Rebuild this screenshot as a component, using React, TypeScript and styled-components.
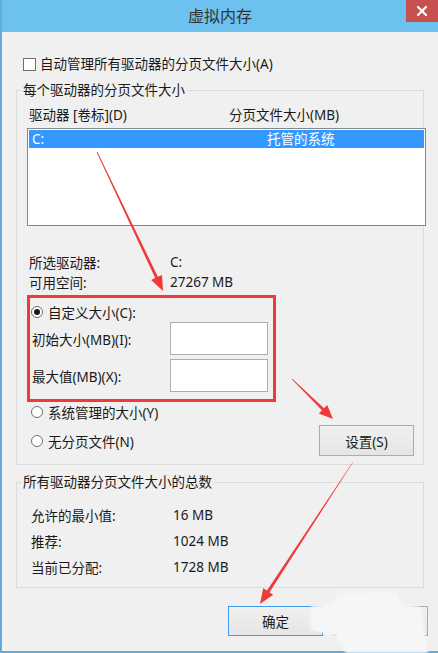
import React from 'react';
import styled, { createGlobalStyle } from 'styled-components';

const GlobalStyle = createGlobalStyle`
  html, body {
    margin: 0;
    padding: 0;
    background: #f0f0f0;
  }
  body {
    font-family: "Noto Sans", "Noto Sans CJK SC", sans-serif;
  }
`;

const Window = styled.div`
  position: relative;
  width: 438px;
  height: 653px;
  box-sizing: border-box;
  border-left: 2px solid #62ade0;
  border-bottom: 2px solid #62ade0;
  background: #f0f0f0;
  display: flex;
  flex-direction: column;
  font-size: 13.5px;
  color: #1a1a1a;
`;

const TitleBar = styled.div`
  height: 32px;
  flex-shrink: 0;
  background: #6cc1ef;
  display: grid;
  grid-template-columns: 1fr auto 1fr;
`;

const Title = styled.div`
  grid-column: 2;
  align-self: center;
  font-size: 16px;
  line-height: 20px;
  color: #333;
`;

const CloseButton = styled.div`
  grid-column: 3;
  justify-self: end;
  width: 32px;
  height: 22px;
  background: #c75050;
  display: flex;
  align-items: center;
  justify-content: center;
`;

const Content = styled.div`
  padding: 23px 14px 0 14px;
`;

const CheckRow = styled.label`
  display: flex;
  align-items: center;
  gap: 4px;
  height: 18px;
  line-height: 18px;
  padding-left: 7px;
`;

const CheckBox = styled.span`
  width: 13px;
  height: 13px;
  box-sizing: border-box;
  border: 1px solid #707070;
  background: #fff;
  flex-shrink: 0;
`;

const GroupBox = styled.fieldset<{ $gap: number }>`
  margin: ${p => p.$gap}px 0 0 0;
  padding: 0 0 0 4px;
  border: 1px solid #dcdcdc;
  min-width: 0;
`;

const Legend = styled.legend`
  padding: 0 2px;
  line-height: 18px;
`;

const GroupInner = styled.div<{ $top: number; $bottom: number; $left: number }>`
  padding: ${p => p.$top}px 0 ${p => p.$bottom}px ${p => p.$left}px;
`;

const HeaderRow = styled.div`
  display: grid;
  grid-template-columns: 200px 1fr;
  padding-left: 2px;
  line-height: 18px;
`;

const ListBox = styled.div`
  margin-top: 4px;
  width: 399px;
  height: 98px;
  box-sizing: border-box;
  border: 1px solid #828790;
  background: #fff;
  padding: 1px;
`;

const ListRow = styled.div<{ $selected?: boolean }>`
  display: grid;
  grid-template-columns: 235px 1fr;
  height: 18px;
  line-height: 18px;
  padding-left: 3px;
  background: ${p => (p.$selected ? '#3399ff' : 'transparent')};
  color: ${p => (p.$selected ? '#fff' : '#1a1a1a')};
`;

const InfoGrid = styled.div<{ $top: number; $label: number; $row: number; $left: number; $bottom?: number }>`
  margin-top: ${p => p.$top}px;
  padding: 0 0 ${p => p.$bottom ?? 0}px ${p => p.$left}px;
  display: grid;
  grid-template-columns: ${p => p.$label}px auto;
  grid-auto-rows: ${p => p.$row}px;
  align-items: center;
`;

const RadioRow = styled.label<{ $top: number }>`
  display: flex;
  align-items: center;
  gap: 5px;
  height: 20px;
  margin-top: ${p => p.$top}px;
  padding-left: 4px;
`;

const Radio = styled.span<{ $checked?: boolean }>`
  width: 12px;
  height: 12px;
  box-sizing: border-box;
  border: 1px solid #707070;
  border-radius: 50%;
  background: #fff;
  display: flex;
  align-items: center;
  justify-content: center;
  flex-shrink: 0;

  &::after {
    content: '';
    display: ${p => (p.$checked ? 'block' : 'none')};
    width: 6px;
    height: 6px;
    border-radius: 50%;
    background: #1a1a1a;
  }
`;

const SizeRow = styled.div<{ $top: number }>`
  display: grid;
  grid-template-columns: 138px 98px;
  align-items: center;
  padding-left: 5px;
  margin-top: ${p => p.$top}px;
`;

const TextBox = styled.input`
  width: 98px;
  height: 33px;
  box-sizing: border-box;
  border: 1px solid #abadb3;
  background: #fff;
  margin: 0;
  padding: 0 4px;
  font: inherit;
`;

const LastRow = styled.div`
  display: flex;
  align-items: center;
  justify-content: space-between;
  margin-top: 3px;
  padding-right: 9px;
`;

const Button = styled.button<{ $default?: boolean; $h: number }>`
  width: 95px;
  height: ${p => p.$h}px;
  box-sizing: border-box;
  margin: 0;
  padding: 0;
  border: 1px solid ${p => (p.$default ? '#3d9cf0' : '#acacac')};
  background: linear-gradient(#f0f0f0, #e5e5e5);
  font: inherit;
  font-size: 13.5px;
  color: #1a1a1a;
`;

const Footer = styled.div`
  display: flex;
  justify-content: flex-end;
  gap: 10px;
  padding: 18px 10px 0 0;
`;

const Overlay = styled.svg`
  position: absolute;
  top: 0;
  left: -2px;
  width: 438px;
  height: 653px;
  pointer-events: none;
  overflow: visible;
`;

type Pt = [number, number];

const arrowPoints = (tail: Pt, tip: Pt, headLen = 15, headW = 6, w0 = 0.4, w1 = 1.5) => {
  const dx = tip[0] - tail[0];
  const dy = tip[1] - tail[1];
  const len = Math.hypot(dx, dy);
  const ux = dx / len;
  const uy = dy / len;
  const nx = -uy;
  const ny = ux;
  const bx = tip[0] - ux * headLen;
  const by = tip[1] - uy * headLen;
  const pts: Pt[] = [
    [tail[0] + nx * w0, tail[1] + ny * w0],
    [bx + nx * w1, by + ny * w1],
    [bx + nx * headW, by + ny * headW],
    tip,
    [bx - nx * headW, by - ny * headW],
    [bx - nx * w1, by - ny * w1],
    [tail[0] - nx * w0, tail[1] - ny * w0],
  ];
  return pts.map(p => `${p[0].toFixed(1)},${p[1].toFixed(1)}`).join(' ');
};

const RED = '#f03a3a';

const Annotations = () => (
  <Overlay viewBox="0 0 438 653">
    <defs>
      <filter id="soft" x="-20%" y="-20%" width="140%" height="140%">
        <feGaussianBlur stdDeviation="1.2" />
      </filter>
    </defs>
    <rect x="28.5" y="296.5" width="246" height="104" fill="none" stroke={RED} strokeWidth="3" />
    <polygon points={arrowPoints([97, 152], [163, 291])} fill={RED} />
    <polygon points={arrowPoints([292, 379], [333, 419], 14, 6, 0.4, 1.4)} fill={RED} />
    <polygon points={arrowPoints([353, 462], [260, 604], 15, 6, 0.2, 1.5)} fill={RED} />
    <path
      d="M338 593 L396 592 L402 604 L421 607 L426 640 L428 653 L346 653 L336 636 L310 630 L311 606 L333 604 Z"
      fill="#f6f6f6"
      filter="url(#soft)"
    />
  </Overlay>
);

export default function App() {
  return (
    <>
      <GlobalStyle />
      <Window>
        <TitleBar>
          <Title>虚拟内存</Title>
          <CloseButton>
            <svg width="10" height="10" viewBox="0 0 10 10">
              <path d="M1 1 L9 9 M9 1 L1 9" stroke="#fff" strokeWidth="2.2" strokeLinecap="square" />
            </svg>
          </CloseButton>
        </TitleBar>

        <Content>
          <CheckRow>
            <CheckBox />
            自动管理所有驱动器的分页文件大小(A)
          </CheckRow>

          <GroupBox $gap={8}>
            <Legend>每个驱动器的分页文件大小</Legend>
            <GroupInner $top={7} $bottom={8} $left={6}>
              <HeaderRow>
                <span>驱动器 [卷标](D)</span>
                <span>分页文件大小(MB)</span>
              </HeaderRow>
              <ListBox>
                <ListRow $selected>
                  <span>C:</span>
                  <span>托管的系统</span>
                </ListRow>
              </ListBox>

              <InfoGrid $top={26} $label={141} $row={20} $left={2}>
                <span>所选驱动器:</span>
                <span>C:</span>
                <span>可用空间:</span>
                <span>27267 MB</span>
              </InfoGrid>

              <RadioRow $top={10}>
                <Radio $checked />
                自定义大小(C):
              </RadioRow>
              <SizeRow $top={0}>
                <span>初始大小(MB)(I):</span>
                <TextBox type="text" />
              </SizeRow>
              <SizeRow $top={4}>
                <span>最大值(MB)(X):</span>
                <TextBox type="text" />
              </SizeRow>

              <RadioRow $top={10}>
                <Radio />
                系统管理的大小(Y)
              </RadioRow>
              <LastRow>
                <RadioRow $top={0}>
                  <Radio />
                  无分页文件(N)
                </RadioRow>
                <Button $h={31}>设置(S)</Button>
              </LastRow>
            </GroupInner>
          </GroupBox>

          <GroupBox $gap={8}>
            <Legend>所有驱动器分页文件大小的总数</Legend>
            <InfoGrid $top={11} $label={142} $row={26} $left={10} $bottom={7}>
              <span>允许的最小值:</span>
              <span>16 MB</span>
              <span>推荐:</span>
              <span>1024 MB</span>
              <span>当前已分配:</span>
              <span>1728 MB</span>
            </InfoGrid>
          </GroupBox>
        </Content>

        <Footer>
          <Button $default $h={30}>确定</Button>
          <Button $h={30}>取消</Button>
        </Footer>

        <Annotations />
      </Window>
    </>
  );
}
